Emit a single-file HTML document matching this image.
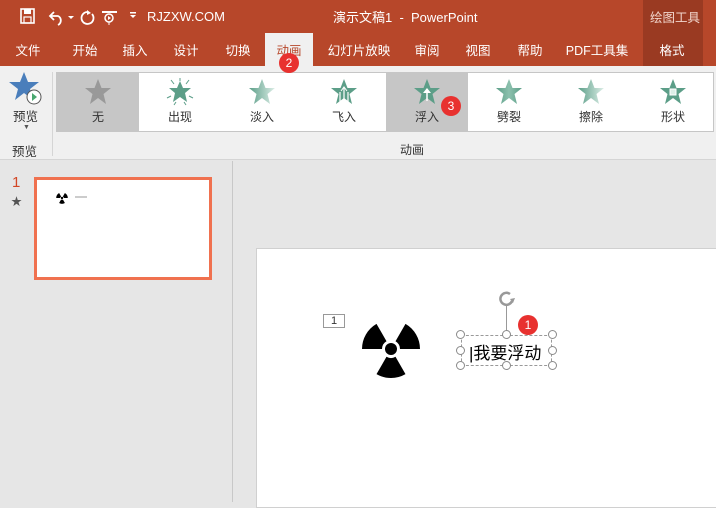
<!DOCTYPE html>
<html><head><meta charset="utf-8">
<style>
*{margin:0;padding:0;box-sizing:border-box}
body{width:716px;height:502px;overflow:hidden;position:relative;background:#e6e6e6;font-family:"Liberation Sans","Noto Sans CJK SC",sans-serif;font-size:12px;color:#444}
.abs{position:absolute}
#title{left:0;top:0;width:716px;height:66px;background:#b7472a}
.w{color:#fff}
.tab{position:absolute;top:40px;color:#fff;font-size:12.5px;transform:translateX(-50%);white-space:nowrap}
.gi{position:absolute;top:0;width:82px;height:58px;text-align:center}
.gi svg{position:absolute;left:27px;top:5px}
.gi span{position:absolute;left:0;right:0;top:35px;font-size:12px;color:#333}
.badge{position:absolute;z-index:5;width:20px;height:20px;border-radius:10px;background:#e8312f;color:#fff;font-size:12px;text-align:center;line-height:20px}
.h{position:absolute;width:9px;height:9px;border:1.3px solid #8a8a8a;border-radius:50%;background:#fff}
</style></head><body>
<div id="title" class="abs"></div>
<div class="abs" style="left:643px;top:0;width:60px;height:66px;background:#9a3a22"></div>
<div class="abs w" style="left:650px;top:7px;font-size:12.5px;color:#f1d5cc">绘图工具</div>
<div class="abs w" style="left:333px;top:7px;font-size:13px">演示文稿1 &nbsp;- &nbsp;PowerPoint</div>
<svg class="abs" style="left:18px;top:6px" width="140" height="22">
<rect x="3" y="3" width="13" height="14" fill="none" stroke="#fff" stroke-width="1.6"/><rect x="6" y="3" width="7" height="5" fill="#fff"/><rect x="6" y="11" width="7" height="6" fill="none" stroke="#fff" stroke-width="1.2"/>
<path d="M36 6 L32 10 L36 14 M32 10 H40 A5 5 0 0 1 40 19" fill="none" stroke="#fff" stroke-width="1.8"/>
<path d="M50 10 l3 3 l3 -3z" fill="#fff"/>
<path d="M70 6 A6 6 0 1 0 74 8" fill="none" stroke="#fff" stroke-width="1.8"/><path d="M69 4 l4 3 l-4 2z" fill="#fff"/>
<rect x="84" y="5" width="15" height="2" fill="#fff"/><circle cx="91" cy="12" r="4" fill="none" stroke="#fff" stroke-width="1.5"/><path d="M90 10 l3 2 l-3 2z" fill="#fff"/><path d="M91 16 v3" stroke="#fff"/>
<path d="M112 9 l3 3 l3-3z" fill="#fff"/><rect x="112" y="6" width="6" height="1.5" fill="#fff"/>
</svg>
<div class="abs w" style="left:147px;top:9px;font-size:13px">RJZXW.COM</div>
<div class="abs" style="left:265px;top:33px;width:48px;height:33px;background:#f0f0f0"></div>
<div class="tab" style="left:28px">文件</div><div class="tab" style="left:85px">开始</div><div class="tab" style="left:135px">插入</div><div class="tab" style="left:186px">设计</div><div class="tab" style="left:238px">切换</div>
<div class="tab" style="left:289px;color:#b7472a">动画</div>
<div class="tab" style="left:359px">幻灯片放映</div><div class="tab" style="left:427px">审阅</div><div class="tab" style="left:478px">视图</div><div class="tab" style="left:530px">帮助</div><div class="tab" style="left:597px">PDF工具集</div><div class="tab" style="left:672px">格式</div>
<div class="abs" style="left:0;top:66px;width:716px;height:94px;background:#f0f0f0;border-bottom:1px solid #d5d5d5"></div>
<div class="badge" style="left:279px;top:53px">2</div>
<div class="abs" style="left:52px;top:72px;width:1px;height:84px;background:#d5d5d5"></div>
<svg class="abs" style="left:8px;top:70px" width="36" height="36"><polygon points="16,2 20,12 31,12 22,19 25,30 16,23 7,30 10,19 1,12 12,12" fill="#4a7ebb"/><circle cx="26" cy="27" r="7" fill="#fff" stroke="#555"/><path d="M24 23 l5 4 l-5 4z" fill="#4aa870"/></svg>
<div class="abs" style="left:13px;top:106px;font-size:12.5px;color:#333">预览</div>
<div class="abs" style="left:23px;top:124px;font-size:7px;color:#555">▼</div>
<div class="abs" style="left:12px;top:141px;font-size:12.5px;color:#333">预览</div>
<div class="abs" style="left:400px;top:141px;font-size:12px;color:#333">动画</div>
<div class="abs" style="left:56px;top:72px;width:658px;height:60px;background:#fff;border:1px solid #c6c6c6">
<svg width="0" height="0" style="position:absolute"><defs><linearGradient id="g" x1="0" x2="1"><stop offset="0" stop-color="#5c9e88"/><stop offset=".5" stop-color="#8cc0ad"/><stop offset="1" stop-color="#5c9e88"/></linearGradient><linearGradient id="f" x1="0" x2="1"><stop offset="0" stop-color="#5c9e88"/><stop offset="1" stop-color="#dceee7"/></linearGradient></defs></svg>
<div class="gi" style="left:0;background:#c6c6c6"><svg width="28" height="28"><polygon points="14,1 17.5,10 27,10 19.5,16 22,26 14,20 6,26 8.5,16 1,10 10.5,10" fill="#999"/></svg><span>无</span></div>
<div class="gi" style="left:82px"><svg width="28" height="28"><polygon points="14,3 17,10 25,10 19,15 21,24 14,19 7,24 9,15 3,10 11,10" fill="#5c9e88"/><path d="M14 0v3M5 2l3 4M23 2l-3 4M1 20l4-2M27 20l-4-2M8 27l2-3M20 27l-2-3" stroke="#5c9e88"/></svg><span>出现</span></div>
<div class="gi" style="left:164px"><svg width="28" height="28"><polygon points="14,1 17.5,10 27,10 19.5,16 22,26 14,20 6,26 8.5,16 1,10 10.5,10" fill="url(#f)"/></svg><span>淡入</span></div>
<div class="gi" style="left:246px"><svg width="28" height="28"><polygon points="14,1 17.5,10 27,10 19.5,16 22,26 14,20 6,26 8.5,16 1,10 10.5,10" fill="#5c9e88"/><path d="M14 10v18M10 14v12M18 14v12" stroke="#fff" stroke-width="1.2"/><path d="M11 13l3-4 3 4" fill="none" stroke="#fff"/></svg><span>飞入</span></div>
<div class="gi" style="left:329px;background:#c6c6c6"><svg width="28" height="28"><polygon points="14,1 17.5,10 27,10 19.5,16 22,26 14,20 6,26 8.5,16 1,10 10.5,10" fill="#5c9e88"/><path d="M14 11v12" stroke="#fff" stroke-width="1.5"/><path d="M10 15l4-5 4 5z" fill="#fff"/></svg><span>浮入</span></div>
<div class="gi" style="left:411px"><svg width="28" height="28"><polygon points="14,1 17.5,10 27,10 19.5,16 22,26 14,20 6,26 8.5,16 1,10 10.5,10" fill="url(#g)"/></svg><span>劈裂</span></div>
<div class="gi" style="left:493px"><svg width="28" height="28"><polygon points="14,1 17.5,10 27,10 19.5,16 22,26 14,20 6,26 8.5,16 1,10 10.5,10" fill="url(#f)"/></svg><span>擦除</span></div>
<div class="gi" style="left:575px"><svg width="28" height="28"><polygon points="14,1 17.5,10 27,10 19.5,16 22,26 14,20 6,26 8.5,16 1,10 10.5,10" fill="#5c9e88"/><rect x="11" y="11" width="6" height="6" fill="#dceee7" stroke="#fff"/></svg><span>形状</span></div>
</div>
<div class="badge" style="left:441px;top:96px">3</div>
<div class="abs" style="left:232px;top:161px;width:1px;height:341px;background:#c8c8c8"></div>
<div class="abs" style="left:12px;top:174px;font-size:15px;color:#d24726">1</div>
<div class="abs" style="left:11px;top:193px;font-size:11px;color:#555">★</div>
<div class="abs" style="left:34px;top:177px;width:178px;height:103px;border:3px solid #f0714f;background:#fff"></div>
<svg class="abs" style="left:56px;top:192px" width="12" height="12" viewBox="-30 -30 60 60"><g fill="#000"><path id="b2" d="M9,0 L29,0 A29,29 0 0 0 14.5,-25.1 L4.5,-7.8 A9,9 0 0 1 9,0Z"/><use href="#b2" transform="rotate(-120)"/><use href="#b2" transform="rotate(120)"/><circle r="6"/></g></svg>
<div class="abs" style="left:75px;top:196px;width:12px;height:2px;background:#ccc"></div>
<div class="abs" style="left:256px;top:248px;width:470px;height:260px;background:#fff;border:1px solid #d0d0d0"></div>
<div class="abs" style="left:323px;top:314px;width:22px;height:14px;border:1px solid #999;background:#fff;font-size:11px;text-align:center;line-height:12px;color:#333">1</div>
<svg class="abs" style="left:361px;top:319px" width="60" height="60" viewBox="-30 -30 60 60"><g fill="#000"><path id="b" d="M9,0 L29,0 A29,29 0 0 0 14.5,-25.1 L4.5,-7.8 A9,9 0 0 1 9,0Z"/><use href="#b" transform="rotate(-120)"/><use href="#b" transform="rotate(120)"/><circle r="6"/></g></svg>
<div class="abs" style="left:461px;top:335px;width:91px;height:31px;border:1px dashed #999"></div>
<div class="abs" style="left:506px;top:304px;width:1px;height:30px;background:#999"></div>
<svg class="abs" style="left:496px;top:289px" width="24" height="20"><path d="M14 5 A6 6 0 1 0 16 12" fill="none" stroke="#999" stroke-width="2.5"/><path d="M14 10 l5 -1 l-2 5z" fill="#999"/></svg>
<div class="abs" style="left:469px;top:339px;font-size:17px;color:#000">|我要浮动</div>
<div class="h" style="left:456px;top:330px"></div><div class="h" style="left:502px;top:330px"></div><div class="h" style="left:548px;top:330px"></div>
<div class="h" style="left:456px;top:346px"></div><div class="h" style="left:548px;top:346px"></div>
<div class="h" style="left:456px;top:361px"></div><div class="h" style="left:502px;top:361px"></div><div class="h" style="left:548px;top:361px"></div>
<div class="badge" style="left:518px;top:315px">1</div>
</body></html>
